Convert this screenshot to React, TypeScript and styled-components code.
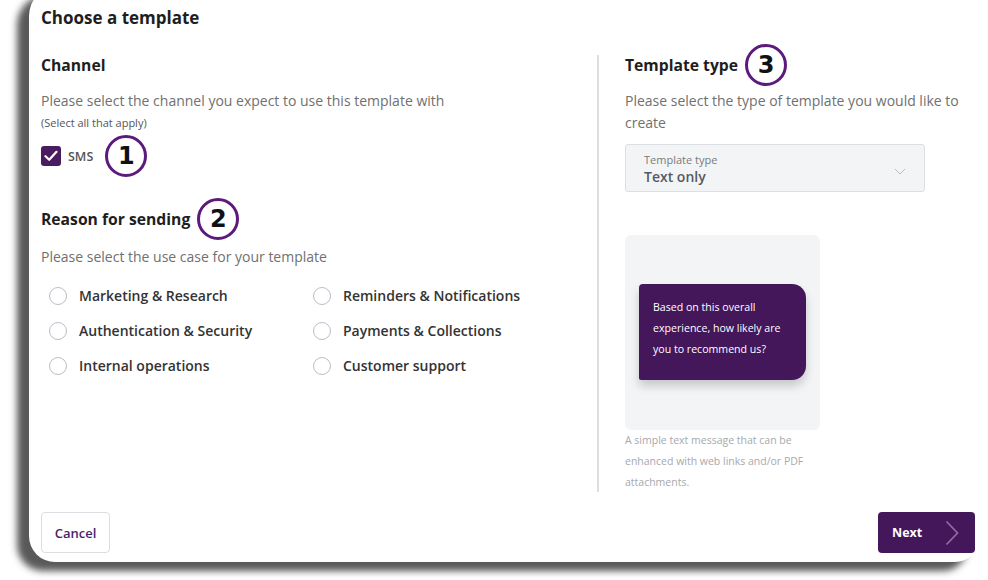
import React from "react";
import styled, { createGlobalStyle } from "styled-components";

const Global = createGlobalStyle`
  html, body { margin: 0; padding: 0; background: #ffffff; overflow: hidden; }
  body { font-family: "Open Sans", "Noto Sans", sans-serif; }
  * { box-sizing: border-box; }
`;

const Page = styled.div`
  width: 988px;
  height: 580px;
  overflow: hidden;
  padding-left: 29px;
`;

const Card = styled.div`
  margin-top: -14px;
  width: 950px;
  height: 576px;
  background: #ffffff;
  border-radius: 30px 0 24px 26px;
  box-shadow: -12px 9px 7px rgba(60, 60, 60, 0.85);
  padding: 20px 4px 0 12px;
  display: flex;
  flex-direction: column;
`;

const Title = styled.h1`
  margin: 0;
  font-size: 17px;
  line-height: 24px;
  font-weight: 700;
  color: #1e1e1e;
`;

const Body = styled.div`
  margin-top: 15px;
  display: flex;
  height: 447px;
  flex-shrink: 0;
`;

const LeftCol = styled.div`
  width: 556px;
  display: flex;
  flex-direction: column;
  & > * { flex-shrink: 0; }
`;

const Divider = styled.div`
  width: 2px;
  background: #dedede;
  margin-top: 10px;
`;

const RightCol = styled.div`
  padding-left: 26px;
  display: flex;
  flex-direction: column;
  & > * { flex-shrink: 0; }
`;

const HeadRow = styled.div<{ $mt?: number }>`
  display: flex;
  align-items: center;
  height: 40px;
  margin-top: ${(p) => p.$mt ?? 0}px;
`;

const Heading = styled.h2`
  margin: 0 7px 0 0;
  font-size: 15.7px;
  line-height: 22px;
  font-weight: 700;
  color: #1e1e1e;
`;

const Marker = styled.div`
  width: 42px;
  height: 42px;
  border: 3px solid #5b1a7c;
  border-radius: 50%;
  display: flex;
  align-items: center;
  justify-content: center;
  font-family: "DejaVu Sans", "Liberation Sans", sans-serif;
  font-size: 24px;
  font-weight: 700;
  color: #111;
  line-height: 1;
`;

const Desc = styled.p<{ $mt: number; $lh?: number; $w?: number }>`
  margin: ${(p) => p.$mt}px 0 0;
  font-size: 14px;
  line-height: ${(p) => p.$lh ?? 20}px;
  color: #707070;
  max-width: ${(p) => (p.$w ? `${p.$w}px` : "none")};
`;

const Small = styled.p`
  margin: 4px 0 0;
  font-size: 11px;
  line-height: 16px;
  color: #555;
`;

const CheckRow = styled.div`
  display: flex;
  align-items: center;
  height: 40px;
  margin-top: 5px;
`;

const CheckBox = styled.span`
  width: 20px;
  height: 20px;
  border-radius: 3px;
  background: #4a1b5e;
  display: flex;
  align-items: center;
  justify-content: center;
`;

const CheckLabel = styled.span`
  margin: 0 12px 0 7px;
  font-size: 12.5px;
  font-weight: 600;
  color: #555;
`;

const RadioGrid = styled.div`
  margin-top: 11px;
  padding-left: 8px;
  display: grid;
  grid-template-columns: 264px 264px;
  grid-auto-rows: 35px;
`;

const RadioItem = styled.label`
  display: flex;
  align-items: center;
  gap: 12px;
  font-size: 14px;
  font-weight: 600;
  color: #333;
`;

const RadioCircle = styled.span`
  width: 18px;
  height: 18px;
  border-radius: 50%;
  border: 1.5px solid #b9bec7;
  background: #fff;
`;

const Select = styled.div`
  margin-top: 10px;
  width: 300px;
  height: 48px;
  background: #f3f4f6;
  border: 1px solid #dcdfe3;
  border-radius: 3px;
  padding: 7px 18px 0 18px;
  display: flex;
  align-items: center;
  justify-content: space-between;
`;

const SelectTexts = styled.div`
  display: flex;
  flex-direction: column;
  margin-top: -6px;
`;

const SelectLabel = styled.span`
  font-size: 11px;
  line-height: 15px;
  color: #7a7a7a;
`;

const SelectValue = styled.span`
  font-size: 14px;
  line-height: 19px;
  font-weight: 600;
  color: #555b63;
`;

const Preview = styled.div`
  margin-top: 43px;
  width: 195px;
  height: 195px;
  background: #f3f4f6;
  border-radius: 6px;
  padding: 49px 14px 0 14px;
`;

const Bubble = styled.div`
  height: 96px;
  background: #44165a;
  border-radius: 4px 14px 14px 2px;
  padding: 13px 10px 0 14px;
  font-size: 10.6px;
  line-height: 21px;
  color: #ffffff;
  box-shadow: 0 6px 10px rgba(0, 0, 0, 0.18);
`;

const Caption = styled.p`
  margin: 0;
  width: 195px;
  font-size: 10.5px;
  line-height: 21px;
  color: #a6a9ae;
`;

const Footer = styled.div`
  margin-top: 20px;
  display: flex;
  justify-content: space-between;
`;

const CancelButton = styled.button`
  width: 69px;
  height: 41px;
  border: 1px solid #dcdde2;
  border-radius: 4px;
  background: #fff;
  font-family: "Open Sans", sans-serif;
  font-size: 13px;
  font-weight: 600;
  color: #4a1f6a;
  padding: 0;
`;

const NextButton = styled.button`
  width: 97px;
  height: 41px;
  border: none;
  border-radius: 4px;
  background: #44165a;
  display: flex;
  align-items: center;
  justify-content: space-between;
  padding: 0 16px 0 14px;
  font-family: "Open Sans", sans-serif;
  font-size: 12.5px;
  font-weight: 700;
  color: #fff;
`;

const reasons = [
  "Marketing & Research",
  "Reminders & Notifications",
  "Authentication & Security",
  "Payments & Collections",
  "Internal operations",
  "Customer support",
];

export default function App() {
  return (
    <>
      <Global />
      <Page>
        <Card>
          <Title>Choose a template</Title>
          <Body>
            <LeftCol>
              <HeadRow>
                <Heading>Channel</Heading>
              </HeadRow>
              <Desc $mt={6}>Please select the channel you expect to use this template with</Desc>
              <Small>(Select all that apply)</Small>
              <CheckRow>
                <CheckBox>
                  <svg width="14" height="12" viewBox="0 0 14 12">
                    <path d="M1.5 6.2 L5.2 9.8 L12.5 1.8" fill="none" stroke="#fff" strokeWidth="2.2" strokeLinecap="round" strokeLinejoin="round" />
                  </svg>
                </CheckBox>
                <CheckLabel>SMS</CheckLabel>
                <Marker>1</Marker>
              </CheckRow>
              <HeadRow $mt={23}>
                <Heading>Reason for sending</Heading>
                <Marker>2</Marker>
              </HeadRow>
              <Desc $mt={8}>Please select the use case for your template</Desc>
              <RadioGrid>
                {reasons.map((r) => (
                  <RadioItem key={r}>
                    <RadioCircle />
                    {r}
                  </RadioItem>
                ))}
              </RadioGrid>
            </LeftCol>
            <Divider />
            <RightCol>
              <HeadRow>
                <Heading>Template type</Heading>
                <Marker>3</Marker>
              </HeadRow>
              <Desc $mt={5} $lh={22} $w={340}>
                Please select the type of template you would like to create
              </Desc>
              <Select>
                <SelectTexts>
                  <SelectLabel>Template type</SelectLabel>
                  <SelectValue>Text only</SelectValue>
                </SelectTexts>
                <svg width="12" height="7" viewBox="0 0 12 7">
                  <path d="M1 1 L6 6 L11 1" fill="none" stroke="#b5b8bd" strokeWidth="1" />
                </svg>
              </Select>
              <Preview>
                <Bubble>
                  Based on this overall experience, how likely are you to recommend us?
                </Bubble>
              </Preview>
              <Caption>A simple text message that can be enhanced with web links and/or PDF attachments.</Caption>
            </RightCol>
          </Body>
          <Footer>
            <CancelButton>Cancel</CancelButton>
            <NextButton>
              Next
              <svg width="14" height="26" viewBox="0 0 14 26">
                <path d="M1.5 1.5 L12.5 13 L1.5 24.5" fill="none" stroke="#8f6aa6" strokeWidth="1.8" />
              </svg>
            </NextButton>
          </Footer>
        </Card>
      </Page>
    </>
  );
}
